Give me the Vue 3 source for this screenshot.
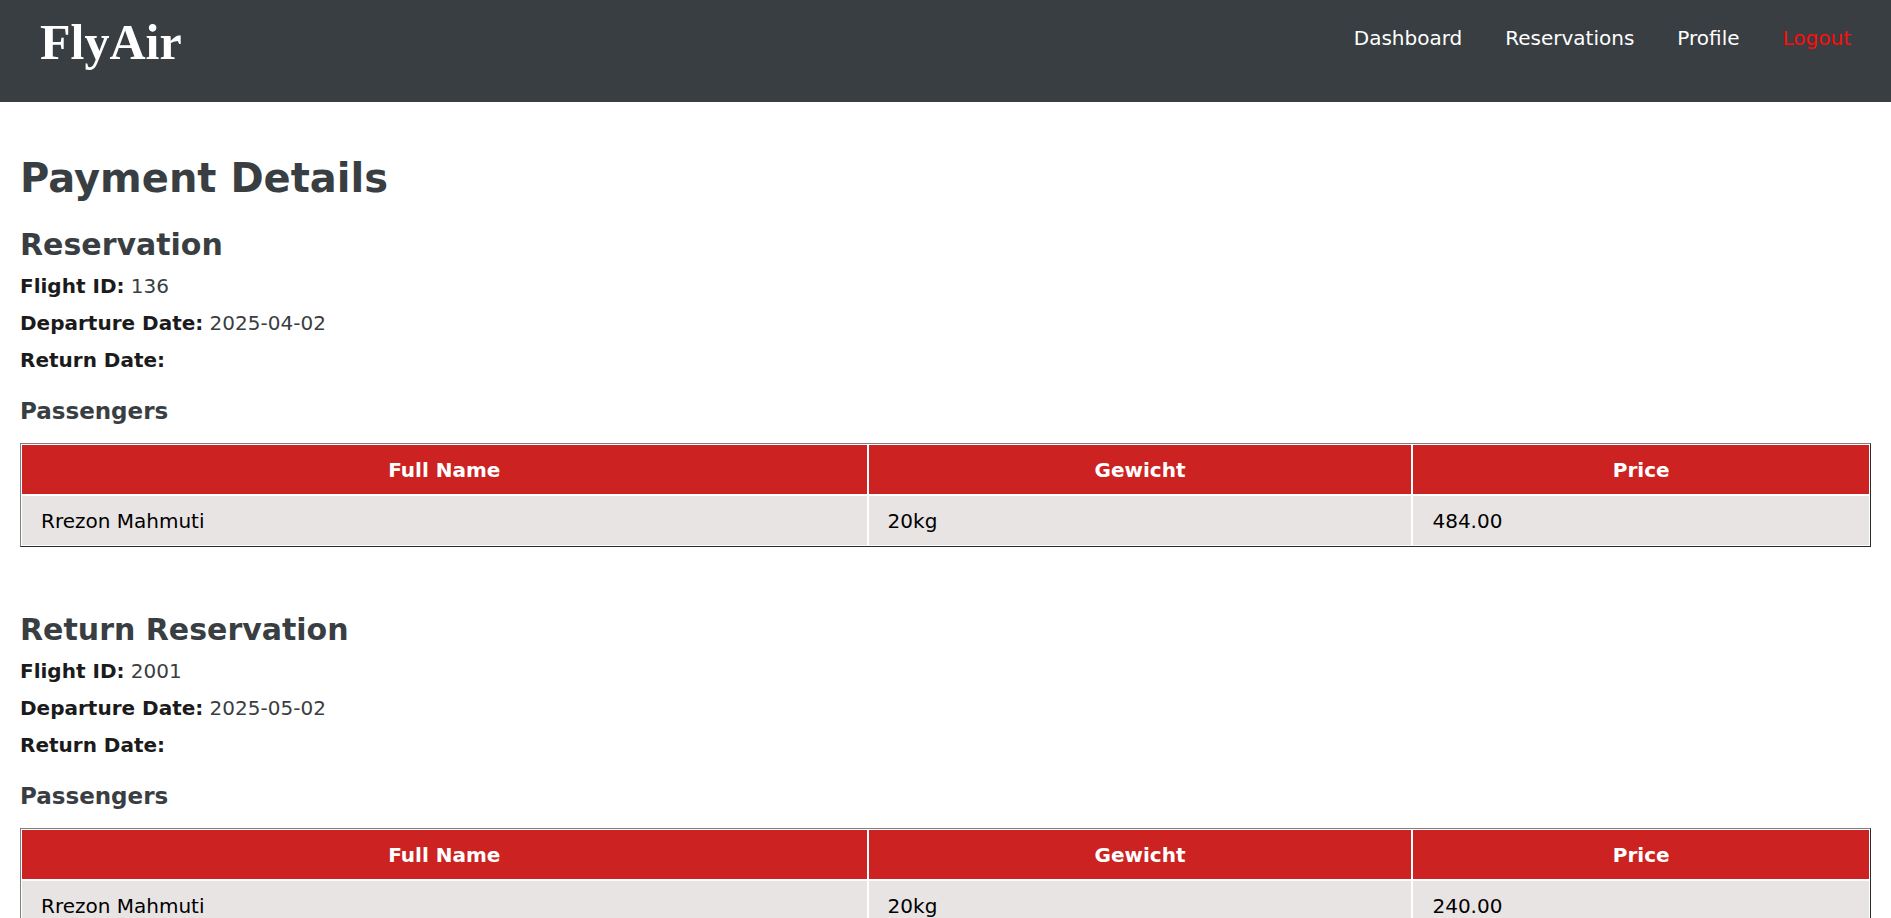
<script setup>
const links = [
  { label: 'Dashboard' },
  { label: 'Reservations' },
  { label: 'Profile' },
  { label: 'Logout', danger: true },
]

const reservations = [
  {
    title: 'Reservation',
    flightId: '136',
    departure: '2025-04-02',
    returnDate: '',
    passengers: [{ name: 'Rrezon Mahmuti', weight: '20kg', price: '484.00' }],
  },
  {
    title: 'Return Reservation',
    flightId: '2001',
    departure: '2025-05-02',
    returnDate: '',
    passengers: [{ name: 'Rrezon Mahmuti', weight: '20kg', price: '240.00' }],
  },
]
</script>

<template>
  <div class="page">
    <header class="topbar">
      <a class="logo" href="#">FlyAir</a>
      <nav class="nav">
        <a v-for="link in links" :key="link.label" href="#" :class="{ danger: link.danger }">{{ link.label }}</a>
      </nav>
    </header>

    <main class="content">
      <h1>Payment Details</h1>
      <section v-for="item in reservations" :key="item.title" class="reservation">
        <h2>{{ item.title }}</h2>
        <p><strong>Flight ID:</strong> {{ item.flightId }}</p>
        <p><strong>Departure Date:</strong> {{ item.departure }}</p>
        <p><strong>Return Date:</strong> {{ item.returnDate }}</p>
        <h3>Passengers</h3>
        <table>
          <thead>
            <tr>
              <th scope="col">Full Name</th>
              <th scope="col">Gewicht</th>
              <th scope="col">Price</th>
            </tr>
          </thead>
          <tbody>
            <tr v-for="person in item.passengers" :key="person.name">
              <td>{{ person.name }}</td>
              <td>{{ person.weight }}</td>
              <td>{{ person.price }}</td>
            </tr>
          </tbody>
        </table>
      </section>
    </main>
  </div>
</template>

<style>
html {
  height: 100%;
  overflow: hidden;
}
body {
  height: 100%;
  margin: 0;
  background: #fff;
}
#app {
  height: 100%;
}
</style>

<style scoped>
.page {
  height: 100%;
  overflow: auto;
  scrollbar-width: none;
  font-family: Verdana, "DejaVu Sans", sans-serif;
  font-size: 20px;
  line-height: 25px;
  color: #393e42;
}
.topbar {
  display: flex;
  justify-content: space-between;
  align-items: flex-start;
  padding: 12px 40px 30px;
  background: #393e42;
}
.logo {
  font-family: "Liberation Serif", "Times New Roman", serif;
  font-size: 50px;
  font-weight: bold;
  line-height: 60px;
  color: #fff;
  text-decoration: none;
}
.nav {
  display: flex;
  gap: 43px;
  padding-top: 14px;
}
.nav a {
  color: #fff;
  text-decoration: none;
}
.nav a.danger {
  color: #ff0c0c;
}
.content {
  padding: 51px 20px;
}
h1,
h2,
h3,
p {
  margin: 0;
}
h1 {
  font-size: 40px;
  line-height: 50px;
}
.reservation {
  margin-bottom: 64px;
}
h1 + .reservation {
  margin-top: 23px;
}
h2 {
  font-size: 30px;
  line-height: 38px;
  margin-bottom: 4px;
}
p {
  line-height: 37px;
}
strong {
  color: #1b1b1b;
}
h3 {
  font-size: 23px;
  line-height: 30px;
  margin: 17px 0;
}
table {
  width: 100%;
  border: 1px solid;
  border-color: #808080 #2c2c2c #2c2c2c #808080;
  border-spacing: 0;
}
th,
td {
  padding: 13px 19px 11px;
  border: 1px solid #fff;
}
th {
  background: #cc2222;
  color: #fff;
}
td {
  background: #e8e4e3;
  color: #000;
}
</style>
